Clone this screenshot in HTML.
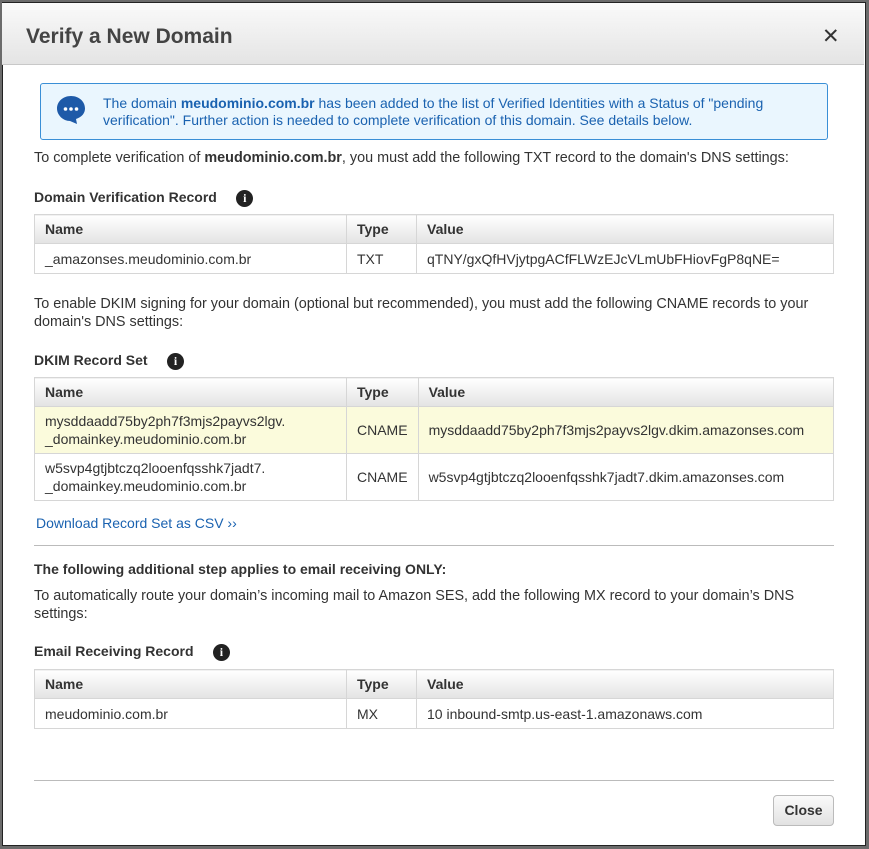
<!DOCTYPE html>
<html><head><style>
*{box-sizing:border-box;margin:0;padding:0}
body{width:869px;height:849px;background:#6b6b6b;font-family:"Liberation Sans",sans-serif;font-size:14px;color:#333;position:relative;overflow:hidden}
.dlg{position:absolute;left:2px;top:2px;width:864px;height:844px;background:#fff;border:1px solid #222}
.in{position:absolute;left:-1px;top:0;width:864px;height:844px}
.hdr{position:absolute;left:0;top:0;width:862px;height:62px;background:linear-gradient(#fafafa,#e4e4e4);border-bottom:1px solid #c8c8c8}
.hdr h1{position:absolute;left:24px;top:22px;font-size:21px;font-weight:bold;color:#444}
.x{position:absolute;left:820px;top:21px;font-size:21px;color:#333}
.a{position:absolute}
.info{left:38px;top:80px;width:788px;height:57px;background:#eaf6fe;border:1px solid #3a8fd6;border-radius:3px;color:#1a62b0;font-size:14px;line-height:17px;padding:11px 10px 0 62px}
table{position:absolute;left:32px;width:800px;border-collapse:collapse;font-size:14px}
th{background:linear-gradient(#fff,#e3e3e3);text-align:left;font-weight:bold;height:29px;padding:0 10px;border:1px solid #d6d6d6;color:#333}
td{border:1px solid #d6d6d6;padding:0 10px;height:30px;color:#333}
.c1{width:312px}.c2{width:70px}
.h{font-weight:bold;font-size:14px}
.i{display:inline-block;width:17px;height:17px;border-radius:50%;background:#222;color:#fff;font:bold 12px "Liberation Serif",serif;text-align:center;line-height:17px;vertical-align:0}
hr{position:absolute;left:32px;width:800px;border:0;border-top:1px solid #bbb}
.btn{left:771px;top:792px;width:61px;height:31px;border:1px solid #bbb;border-radius:4px;background:linear-gradient(#fafafa,#e2e2e2);font-weight:bold;color:#333;text-align:center;line-height:29px}
</style></head><body>
<div class="dlg"><div class="in">
<div class="hdr"><h1>Verify a New Domain</h1><div class="x">✕</div></div>
<div class="a info"><svg style="position:absolute;left:15px;top:11px" width="30" height="30" viewBox="0 0 30 30"><path d="M15 1C7 1 1 6.5 1 13.5 1 20 7 26 14 26L21 29 20 24C26 22 29 18 29 13.5 29 6.5 23 1 15 1Z" fill="#1e5aa8"/><circle cx="9.5" cy="14" r="1.8" fill="#fff"/><circle cx="15" cy="14" r="1.8" fill="#fff"/><circle cx="20.5" cy="14" r="1.8" fill="#fff"/></svg>The domain <b>meudominio.com.br</b> has been added to the list of Verified Identities with a Status of "pending verification". Further action is needed to complete verification of this domain. See details below.</div>
<div class="a" style="left:32px;top:147px;font-size:14.4px">To complete verification of <b>meudominio.com.br</b>, you must add the following TXT record to the domain's DNS settings:</div>
<div class="a h" style="left:32px;top:186px">Domain Verification Record &nbsp;&nbsp;&nbsp;&nbsp;<span class="i">i</span></div>
<table style="top:211px"><tr><th class="c1">Name</th><th class="c2">Type</th><th>Value</th></tr><tr><td>_amazonses.meudominio.com.br</td><td>TXT</td><td>qTNY/gxQfHVjytpgACfFLWzEJcVLmUbFHiovFgP8qNE=</td></tr></table>
<div class="a" style="left:32px;top:292px;width:800px;line-height:18px;font-size:14.4px">To enable DKIM signing for your domain (optional but recommended), you must add the following CNAME records to your domain's DNS settings:</div>
<div class="a h" style="left:32px;top:349px">DKIM Record Set &nbsp;&nbsp;&nbsp;&nbsp;<span class="i">i</span></div>
<table style="top:374px;line-height:18px"><tr><th class="c1">Name</th><th class="c2">Type</th><th>Value</th></tr>
<tr style="background:#fbfbdc"><td style="height:47px">mysddaadd75by2ph7f3mjs2payvs2lgv.<br>_domainkey.meudominio.com.br</td><td>CNAME</td><td>mysddaadd75by2ph7f3mjs2payvs2lgv.dkim.amazonses.com</td></tr>
<tr><td style="height:47px">w5svp4gtjbtczq2looenfqsshk7jadt7.<br>_domainkey.meudominio.com.br</td><td>CNAME</td><td>w5svp4gtjbtczq2looenfqsshk7jadt7.dkim.amazonses.com</td></tr></table>
<div class="a" style="left:34px;top:512px;color:#1a62b0">Download Record Set as CSV ››</div>
<hr style="top:542px">
<div class="a h" style="left:32px;top:558px">The following additional step applies to email receiving ONLY:</div>
<div class="a" style="left:32px;top:584px;width:790px;line-height:18px;font-size:14.4px">To automatically route your domain’s incoming mail to Amazon SES, add the following MX record to your domain’s DNS settings:</div>
<div class="a h" style="left:32px;top:640px">Email Receiving Record &nbsp;&nbsp;&nbsp;&nbsp;<span class="i">i</span></div>
<table style="top:666px"><tr><th class="c1">Name</th><th class="c2">Type</th><th>Value</th></tr><tr><td>meudominio.com.br</td><td>MX</td><td>10 inbound-smtp.us-east-1.amazonaws.com</td></tr></table>
<hr style="top:777px">
<div class="a btn">Close</div>
</div></div>
</body></html>
